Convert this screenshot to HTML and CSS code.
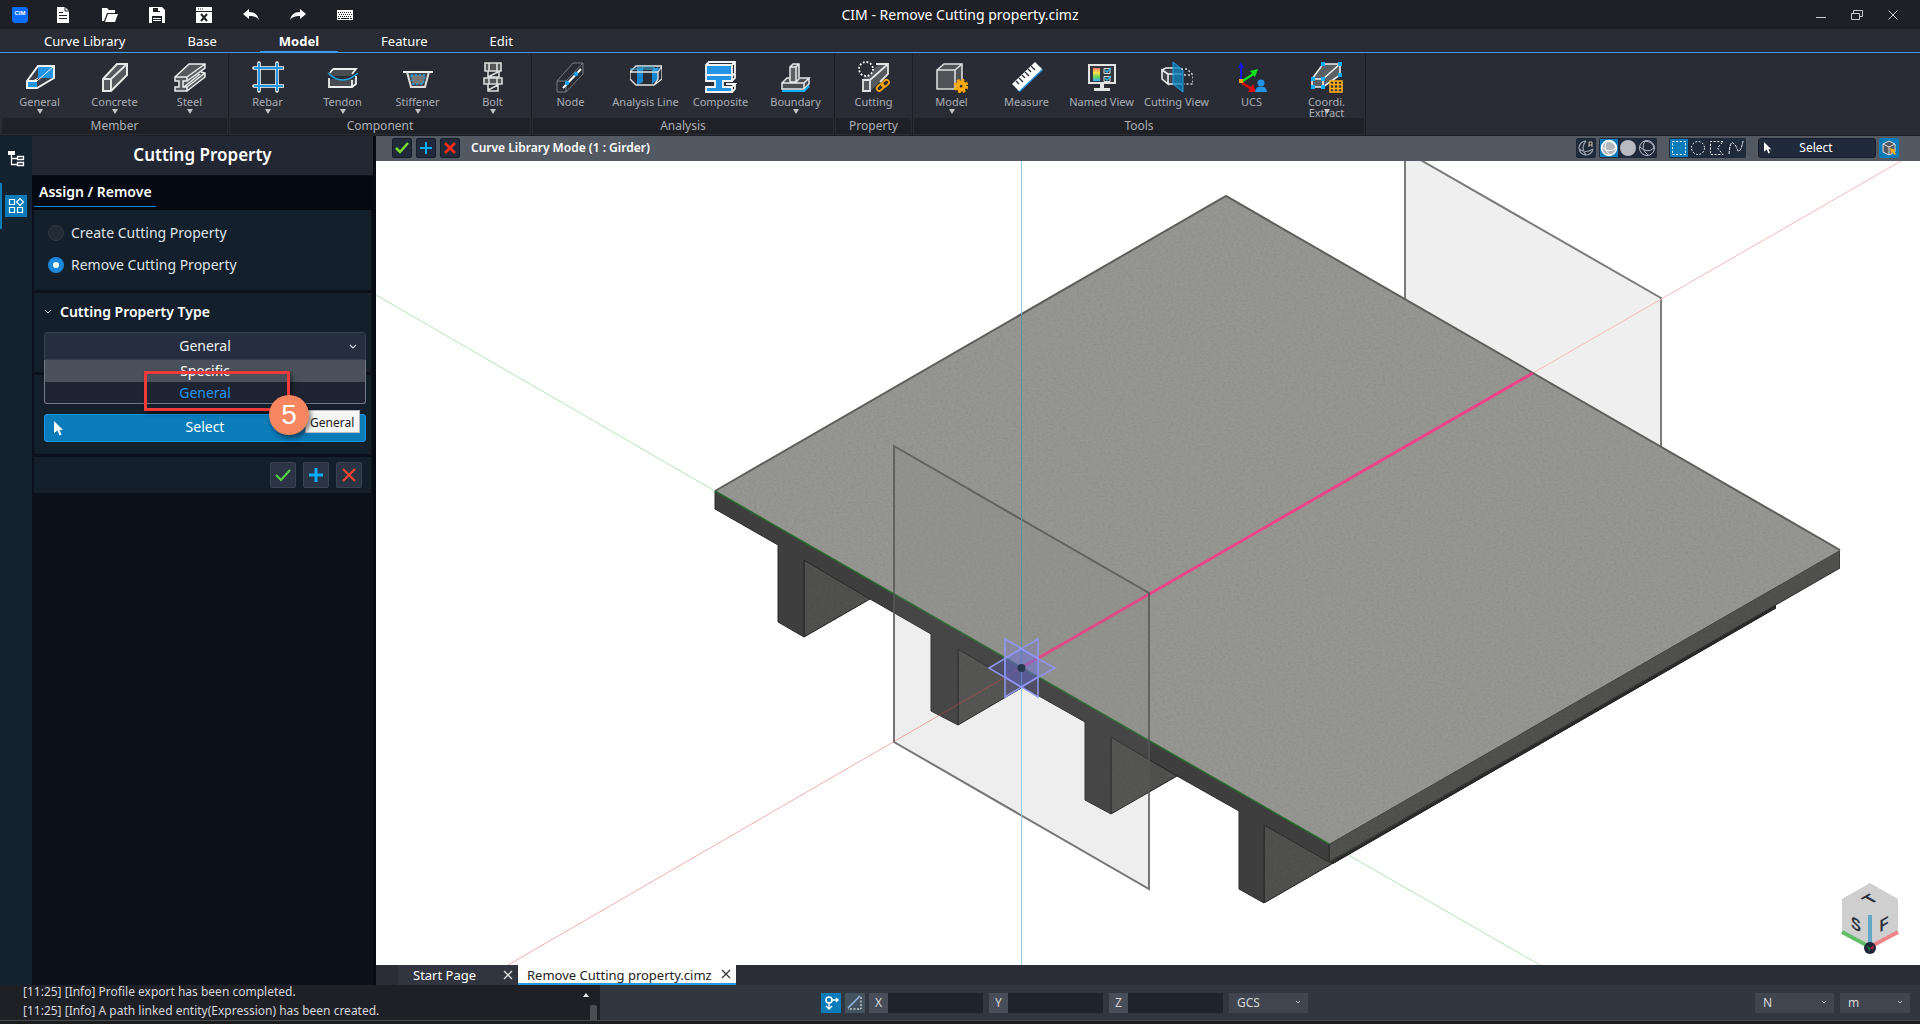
FILE: index.html
```
<!DOCTYPE html>
<html lang="en">
<head>
  <meta charset="UTF-8" />
  <meta name="viewport" content="width=device-width, initial-scale=1.0"/>
  <title>CIM - Remove Cutting property.cimz</title>
  <link rel="stylesheet" href="styles.css">
</head>
<body>
  <header class="titlebar">
    <div class="quick">
      <button class="quick-btn" aria-label="Application menu"><svg width="16" height="16" viewBox="0 0 16 16"><path d="M1 0h13l2 2v12l-2 2H2l-2-2V1z" fill="#0a6cff"/><text x="8" y="8" class="logo-text">CIM</text></svg></button>
      <button class="quick-btn" aria-label="New"><svg width="16" height="16" viewBox="0 0 16 16"><path d="M2 0h8l4 4v12H2z" fill="#fff"/><path d="M10 0v4h4M4 5.500h4M4 8.500h8M4 11.500h8" stroke="#1f2026" fill="none"/></svg></button>
      <button class="quick-btn" aria-label="Open"><svg width="16" height="16" viewBox="0 0 16 16"><path d="M0 1h5l2 2h6v3H5L2 14H0z" fill="#fff"/><path d="M6 7h10l-3 8H3z" fill="#fff"/></svg></button>
      <button class="quick-btn" aria-label="Save"><svg width="16" height="16" viewBox="0 0 16 16"><path d="M0 0h13l3 3v13H0z" fill="#fff"/><path d="M4 1h7v4H4zM3 9h10v7H3z" fill="#1f2026"/><path d="M9 1h2v3H9zM4 11h8v1H4zM4 13h8v1H4z" fill="#fff"/></svg></button>
      <button class="quick-btn" aria-label="Close file"><svg width="16" height="16" viewBox="0 0 16 16"><path d="M0 0h16v16H0z" fill="#fff"/><path d="M0 4.500h16M2 2h1M4 2h1M6 2h1" stroke="#1f2026"/><path d="M5 7l6 7M11 7l-6 7" stroke="#1f2026" stroke-width="2"/></svg></button>
      <button class="quick-btn" aria-label="Undo"><svg width="16" height="16" viewBox="0 0 16 16"><path d="M0 7l6-5v3c6 0 9 3 10 8-2-3-5-4-10-4v3z" fill="#fff"/></svg></button>
      <button class="quick-btn" aria-label="Redo"><svg width="16" height="16" viewBox="0 0 16 16"><path d="M16 7l-6-5v3C4 5 1 8 0 13c2-3 5-4 10-4v3z" fill="#fff"/></svg></button>
      <button class="quick-btn" aria-label="Shortcuts"><svg width="16" height="16" viewBox="0 0 16 16"><path d="M0 3h16v10H0z" fill="#fff"/><path d="M1 5.500h14M2 7.500h13M1 9.500h14" stroke="#1f2026" stroke-dasharray="1 1"/><path d="M1 11.500h2M4 11.500h8M13 11.500h2" stroke="#1f2026"/></svg></button>
    </div>
    <h1 class="app-title">CIM - Remove Cutting property.cimz</h1>
    <div class="window-btns">
      <button aria-label="Minimize"><svg width="12" height="12" viewBox="0 0 12 12"><path d="M1 8.500h10" stroke="#c9cbd0"/></svg></button>
      <button aria-label="Restore"><svg width="12" height="12" viewBox="0 0 12 12"><path d="M.5 4.500h8v6h-8zM2.500 4V1.500h9v6H9" stroke="#c9cbd0" fill="none"/></svg></button>
      <button aria-label="Close"><svg width="12" height="12" viewBox="0 0 12 12"><path d="M1.500 1.500l9 9M10.500 1.500l-9 9" stroke="#c9cbd0"/></svg></button>
    </div>
  </header>

  <nav class="menu">
    <a href="#">Curve Library</a>
    <a href="#">Base</a>
    <a href="#" class="active">Model</a>
    <a href="#">Feature</a>
    <a href="#">Edit</a>
  </nav>

  <section class="ribbon">
    <div class="group">
      <div class="tools">
        <button class="tool has-menu">
          <svg viewBox="0 0 32 32"><path d="M3 20L14 5h17v12L13 28H3z" fill="#3a3e48"/><path d="M14 5h16v12H14z" fill="#2194e6"/><path d="M3 20h10v7H3z" fill="#2194e6"/><path d="M13 20L30 5M14 17l-5 3" stroke="#fff"/><path d="M3 20L14 5h16v12L13 27H3zM3 20h10" fill="none" stroke="#f1f1f1" stroke-width="2"/></svg>
          <span>General</span></button>
        <button class="tool has-menu">
          <svg viewBox="0 0 32 32"><path d="M4 18L18 3h10v11L12 30H4z" fill="#55585c"/><path d="M4 18h8v12M12 18L28 3" stroke="#e3e3e3" stroke-width="2" fill="none"/><path d="M4 18L18 3h10v11L12 30H4z" fill="none" stroke="#e8e8e8" stroke-width="2"/></svg>
          <span>Concrete</span></button>
        <button class="tool has-menu">
          <svg viewBox="0 0 32 32"><path d="M1 16L15 3h16v5l-4 3 4 1v4L13 30H1v-4h4v-6H1z" fill="#55585c"/><path d="M1 16h12v4h-4v6h4v4H1v-4h4v-6H1zM1 16L15 3h16v4L13 20M13 16L31 3M10 26l16-13M27 11l4 1v4L13 30M13 26l18-14" stroke="#ececec" stroke-width="1.500" fill="none"/></svg>
          <span>Steel</span></button>
      </div>
      <div class="group-name">Member</div>
    </div>
    <div class="group">
      <div class="tools">
        <button class="tool has-menu">
          <svg viewBox="0 0 32 32"><path d="M7 2v28M25 2v28M2 7h29M2 25h29" stroke="#fff" stroke-width="3.500" stroke-linecap="round"/><path d="M7 2v28M25 2v28M2 7h29M2 25h29" stroke="#2194e6" stroke-width="2"/></svg>
          <span>Rebar</span></button>
        <button class="tool has-menu">
          <svg viewBox="0 0 32 32"><path d="M7 9h22l-5 6H2zM2 18l24 0 4-3v8l-5 3H2z" fill="#484b50"/><path d="M6 8h23l-4 5M6 8l-3 4M2 17v9h23v-7M25 26l4-3v-8" stroke="#eee" stroke-width="1.800" fill="none"/><path d="M1 12q14 14 30 0" stroke="#1fa5e5" stroke-width="1.600" fill="none"/></svg>
          <span>Tendon</span></button>
        <button class="tool has-menu">
          <svg viewBox="0 0 32 32"><path d="M5 11l4 15h14l4-15z" fill="#44484e"/><path d="M1 11h30" stroke="#f1f1f1" stroke-width="2"/><path d="M5 11l4 15h14l4-15" stroke="#ddd" stroke-width="2" fill="none"/><path d="M9 14h14l-2 9H11z" stroke="#1fa5e5" stroke-width="1.500" stroke-dasharray="2 2" fill="#777"/></svg>
          <span>Stiffener</span></button>
        <button class="tool has-menu">
          <svg viewBox="0 0 32 32"><path d="M8 2h16v8H8zM7 17h18v6H7z" fill="#555"/><path d="M8 2h16v8H8zM12 2v8M20 2v8M11 10v6h11v-6M7 17h18v6H7zM12 17v6M20 17v6M11 23v7h10v-7M11 29l10-5M11 16l10-5" stroke="#ddd" stroke-width="1.600" fill="none"/></svg>
          <span>Bolt</span></button>
      </div>
      <div class="group-name">Component</div>
    </div>
    <div class="group">
      <div class="tools">
        <button class="tool">
          <svg viewBox="0 0 32 32"><path d="M2 20L18 2h10v11L11 31H2zM2 20h9v11M11 20L28 2" stroke="#777a81" fill="none"/><path d="M8 27L26 8" stroke="#fff" stroke-width="2"/><circle cx="12" cy="22" r="2.200" fill="#1fa5f5"/><circle cx="21" cy="13" r="2.200" fill="#1fa5f5"/></svg>
          <span>Node</span></button>
        <button class="tool">
          <svg viewBox="0 0 32 32"><path d="M7 9l6-3v15l-6 3zM22 9l6-3v12l-6 5z" fill="#1688d2"/><path d="M0 11l6-6h26l-4 6zM0 11v7l6 6h18l8-6V5M24 24l4-6v-7" stroke="#e4e4e4" stroke-width="1.300" fill="none"/><path d="M8 10V6h16v5M0 8h31" stroke="#42b8ef" fill="none"/></svg>
          <span>Analysis Line</span></button>
        <button class="tool">
          <svg viewBox="0 0 32 32"><path d="M1 4h26v10H1zM1 15h26v5h-9v6h9v5H1v-5h9v-6H1z" fill="#2194e6"/><path d="M1 4l3-3h26v11l-3 3v5h-9v6h9v5H1v-5h9v-6H1zM1 4h26v10M1 14h26M27 4l3-3M27 20l3-3v-4M27 26l3-3h-9M27 31l3-3v-5" stroke="#f4f4f4" stroke-width="1.800" fill="none"/></svg>
          <span>Composite</span></button>
        <button class="tool has-menu">
          <svg viewBox="0 0 32 32"><path d="M2 22l5-5h22v7l-5 6H2z" fill="#4b4e52"/><path d="M10 6l3-3h6v15l-3 4h-6z" fill="#5b5e62"/><path d="M2 22l5-5h3M20 17h9l-5 5H2v6h22v-6M24 28l5-5v-6M10 21V6h6v15h-6M10 6l3-3h6v15l-3 3M16 6l3-3" stroke="#e8e8e8" stroke-width="1.500" fill="none"/><path d="M2 30h22l5-5" stroke="#08adfa" stroke-width="2" fill="none"/></svg>
          <span>Boundary</span></button>
      </div>
      <div class="group-name">Analysis</div>
    </div>
    <div class="group">
      <div class="tools">
        <button class="tool">
          <svg viewBox="0 0 32 32"><path d="M5 18L21 3h9v11L12 30H5z" fill="#55585c"/><path d="M5 19h7v11H5zM18 3h12v10l-8 8M12 19L30 3" stroke="#e4e4e4" stroke-width="1.800" fill="none"/><circle cx="8" cy="8" r="7" fill="#2a2c35" stroke="#fff" stroke-width="1.800" stroke-dasharray="1.800 1.900"/><g stroke="#f0a30a" stroke-width="1.800" fill="none"><rect x="18" y="24" width="8" height="5" rx="2.500" transform="rotate(-42 22 26)"/><rect x="23" y="20" width="8" height="5" rx="2.500" transform="rotate(-42 27 22)"/></g></svg>
          <span>Cutting</span></button>
      </div>
      <div class="group-name">Property</div>
    </div>
    <div class="group">
      <div class="tools">
        <button class="tool has-menu">
          <svg viewBox="0 0 32 32"><path d="M1 9l7-6h18v19l-6 6H1z" fill="#4f5257"/><path d="M1 9l7-6h18v18l-6 7H1zM1 9h18v19M19 9l7-6" stroke="#ddd" stroke-width="1.600" fill="none"/><circle cx="25" cy="25" r="6" fill="none" stroke="#ffa800" stroke-width="2.500" stroke-dasharray="2.700 2"/><circle cx="25" cy="25" r="3.500" fill="none" stroke="#ffa800" stroke-width="4"/></svg>
          <span>Model</span></button>
        <button class="tool">
          <svg viewBox="0 0 32 32"><path d="M9 31L32 9l-3-3L6 29z" fill="#2194e6"/><path d="M1 23L24 1l7 7L8 30z" fill="#fff"/><path d="M5 20l3 3M8 17l4 4M11 14l3 3M14 11l4 4M17 8l3 3M20 5l4 4" stroke="#2a2c35" stroke-width="1.300"/></svg>
          <span>Measure</span></button>
        <button class="tool">
          <svg viewBox="0 0 32 32"><defs><linearGradient id="rainbow" x2="0" y2="1"><stop stop-color="#f6766c"/><stop offset=".35" stop-color="#ffe04a"/><stop offset=".65" stop-color="#6edb55"/><stop offset="1" stop-color="#3dadf2"/></linearGradient></defs><path d="M3 4h26v18H3z" fill="#33363e" stroke="#e4e4e4" stroke-width="2"/><path d="M7 7h7v13H7z" fill="url(#rainbow)"/><path d="M18 7.500h6v5h-6zM18 15.500h6v5h-6z" stroke="#ddd" fill="none"/><path d="M19 9l2 2 4-4M19 17l2 2 4-4" stroke="#2ab3f5" stroke-width="1.500" fill="none"/><path d="M14 23h4v4h6v3H8v-3h6z" fill="#e4e4e4"/></svg>
          <span>Named View</span></button>
        <button class="tool">
          <svg viewBox="0 0 32 32"><path d="M1 9h12l7-2v16H7l-6-5z" fill="#404349"/><path d="M1 9l4-2h14M1 9l6 4v10l-6-5zM7 13h14M7 23h14" stroke="#eee" stroke-width="1.600" fill="none"/><path d="M12 1l10 8v22l-10-8z" fill="#087fbe" fill-opacity=".75" stroke="#22a3e5"/><path d="M20 8h6l6 6v9h-9M23 14h8" stroke="#d5d5d5" stroke-width="1.500" stroke-dasharray="2 2" fill="none"/></svg>
          <span>Cutting View</span></button>
        <button class="tool">
          <svg viewBox="0 0 32 32"><path d="M5 21V5" stroke="#1717e8" stroke-width="2"/><path d="M5 1l3 6H2z" fill="#1717e8"/><path d="M5 21l14-9" stroke="#0de51b" stroke-width="2.500"/><path d="M22 8l-3 8-5-6z" fill="#0de51b"/><path d="M6 22l10 6" stroke="#de0b0b" stroke-width="2.500"/><path d="M20 31l-8 0 5-8z" fill="#de0b0b"/><path d="M3 18h4v4H3z" fill="#ffa20a"/><circle cx="25" cy="22" r="3.500" fill="#2194e6"/><path d="M19 31q1-6 6-5 5-1 6 5z" fill="#2194e6"/></svg>
          <span>UCS</span></button>
        <button class="tool has-menu">
          <svg viewBox="0 0 32 32"><path d="M1 18L12 3h17v11L13 26H1z" fill="#5b5e62"/><path d="M1 18L12 3h17v11L12 26H1zM1 18h11v8M12 18L29 3" stroke="#eee" stroke-width="1.600" fill="none"/><path d="M10 1h4v4h-4zM27 1h4v4h-4zM27 12h4v4h-4zM0 16h4v4H0zM10 16h4v4h-4zM0 24h4v4H0zM10 24h4v4h-4z" fill="#08adfa"/><path d="M19 20h12v11H19zM19 23.500h12M19 27.500h12M23 20v11M27 20v11" fill="#333" stroke="#ffb11a" stroke-width="1.600"/></svg>
          <span>Coordi.<br>Extract</span></button>
      </div>
      <div class="group-name">Tools</div>
    </div>
  </section>

  <main class="workspace">
    <nav class="rail">
      <button class="rail-btn" aria-label="Works tree"><svg width="18" height="18" viewBox="0 0 18 18"><path d="M1 1h7v4H1z" fill="#fff"/><path d="M4.500 5v9.500H10M4.500 8.500H10M10.500 6.500h6v3h-6zM10.500 12.500h6v3h-6z" stroke="#fff" fill="none" stroke-width="1.300"/></svg></button>
      <button class="rail-btn active" aria-label="Task panel"><svg width="16" height="16" viewBox="0 0 16 16"><path d="M1.500 1.500h5v5h-5zM1.500 9.500h5v5h-5zM9.500 9.500h5v5h-5zM12 .5L15.500 4 12 7.500 8.500 4z" stroke="#fff" fill="none" stroke-width="1.200"/></svg></button>
    </nav>

    <aside class="panel">
      <h2 class="panel-title">Cutting Property</h2>
      <div class="panel-tabs"><a href="#">Assign / Remove</a></div>

      <div class="section radios">
        <label><input type="radio" name="mode">Create Cutting Property</label>
        <label><input type="radio" name="mode" checked>Remove Cutting Property</label>
      </div>

      <div class="section type">
        <h3><svg width="8" height="6" viewBox="0 0 8 6"><path d="M1 1l3 3 3-3" stroke="#d5d8dd" fill="none"/></svg><label for="ptype">Cutting Property Type</label></h3>
        <div class="combo">
          <select id="ptype"><option>General</option><option>Specific</option></select>
          <svg class="chev" width="8" height="6" viewBox="0 0 8 6"><path d="M1 1l3 3 3-3" stroke="#d5d8dd" fill="none" stroke-width="1.200"/></svg>
          <ul class="combo-list">
            <li>Specific</li>
            <li class="chosen">General</li>
          </ul>
          <div class="mark-box"></div>
          <div class="mark-num">5</div>
          <div class="tip">General</div>
        </div>
      </div>

      <div class="section target">
        <button class="select-btn"><svg width="10" height="15" viewBox="0 0 10 15"><path d="M0 0l9 9H5.500l2 4.500-2 1-2-5L0 12z" fill="#fff"/></svg>Select</button>
      </div>

      <div class="section actions">
        <button aria-label="OK"><svg width="16" height="14" viewBox="0 0 16 14"><path d="M1 7l5 5 9-10" stroke="#58d043" stroke-width="2" fill="none"/></svg></button>
        <button aria-label="Apply"><svg width="16" height="16" viewBox="0 0 16 16"><path d="M8 1v14M1 8h14" stroke="#08adfa" stroke-width="3"/></svg></button>
        <button aria-label="Cancel"><svg width="14" height="14" viewBox="0 0 14 14"><path d="M1 1l12 12M13 1L1 13" stroke="#ff4530" stroke-width="2"/></svg></button>
      </div>
    </aside>

    <section class="view">
      <div class="view-bar">
        <button class="sq" aria-label="OK"><svg width="16" height="14" viewBox="0 0 16 14"><path d="M2 7l4 4 8-9" stroke="#7ddc32" stroke-width="2.500" fill="none"/></svg></button>
        <button class="sq" aria-label="Add"><svg width="14" height="14" viewBox="0 0 14 14"><path d="M7 1v12M1 7h12" stroke="#08adfa" stroke-width="2"/></svg></button>
        <button class="sq" aria-label="Cancel"><svg width="14" height="14" viewBox="0 0 14 14"><path d="M2 2l10 10M12 2L2 12" stroke="#ff2b1c" stroke-width="2.500"/></svg></button>
        <strong class="mode">Curve Library Mode (1 : Girder)</strong>
        <div class="view-tools">
          <div class="cluster"><button aria-label="Auto shading"><svg width="16" height="16" viewBox="0 0 16 16"><path d="M8 1a7 7 0 1 0 7 8M8 1q-6 7 0 14M1 9q7 5 14 0" stroke="#9a9fa8" fill="none" stroke-width="1.200"/><path d="M11 7V2h3v5M11 5h3" stroke="#c9bfa4" fill="none"/></svg></button></div>
          <div class="cluster">
            <button class="on" aria-label="Shaded with edges"><svg width="18" height="18" viewBox="0 0 18 18"><circle cx="9" cy="9" r="7.500" fill="#b3b6bb" stroke="#fff" stroke-width="1.500"/><path d="M7 2q-5 8 3 14M2 8q7 7 14 1M7 2q8 1 9 7" stroke="#fff" fill="none"/></svg></button>
            <button aria-label="Shaded"><svg width="18" height="18" viewBox="0 0 18 18"><circle cx="9" cy="9" r="8" fill="#b8bac2"/></svg></button>
            <button aria-label="Wireframe"><svg width="18" height="18" viewBox="0 0 18 18"><circle cx="9" cy="9" r="7.500" fill="none" stroke="#b8bac2"/><path d="M7 2q-5 8 3 14M2 8q7 7 14 1M7 2q8 1 9 7" stroke="#b8bac2" fill="none"/></svg></button>
          </div>
          <div class="cluster wide">
            <button class="on" aria-label="Box selection"><svg width="16" height="16" viewBox="0 0 16 16"><path d="M1.500 1.500h13v13h-13z" stroke="#fff" stroke-dasharray="2 1.700" fill="none"/></svg></button>
            <button aria-label="Circle selection"><svg width="16" height="16" viewBox="0 0 16 16"><circle cx="8" cy="8" r="6.500" stroke="#fff" stroke-dasharray="1.700 1.700" fill="none"/></svg></button>
            <button aria-label="Polygon selection"><svg width="16" height="16" viewBox="0 0 16 16"><path d="M14 1.500H1.500v13H14L8.500 8z" stroke="#fff" stroke-dasharray="2 1.700" fill="none"/></svg></button>
            <button aria-label="Polyline selection"><svg width="16" height="16" viewBox="0 0 16 16"><path d="M1 14Q2 1 5 3t5 8q3 1 5-10" stroke="#fff" stroke-dasharray="3 1" fill="none"/></svg></button>
          </div>
          <button class="pick"><svg width="8" height="12" viewBox="0 0 10 15"><path d="M0 0l9 9H5.500l2 4.500-2 1-2-5L0 12z" fill="#fff"/></svg>Select</button>
          <button class="sq on" aria-label="Pick solid"><svg width="16" height="16" viewBox="0 0 16 16"><path d="M8 1l6 3v8l-6 3-6-3V4z" fill="#55585e" stroke="#ddd"/><path d="M2 4l6 3 6-3M8 7v8" stroke="#ddd" fill="none"/><path d="M9 8l6 2-2 1 2 3-1 1-3-3-1 2z" fill="#ffad0f"/></svg></button>
        </div>
      </div>

      <svg class="scene" viewBox="376 161 1544 804" preserveAspectRatio="xMidYMid slice">
        <defs>
          <filter id="grain" x="0" y="0" width="1" height="1">
            <feTurbulence type="fractalNoise" baseFrequency=".35 .5" numOctaves="3" seed="4" result="n"/>
            <feColorMatrix in="n" values="0 0 0 0 0  0 0 0 0 0  0 0 0 0 0  .25 0 0 0 -.1" result="d"/>
            <feComposite in="d" in2="SourceAlpha" operator="in" result="g"/>
            <feMerge><feMergeNode in="SourceGraphic"/><feMergeNode in="g"/></feMerge>
          </filter>
        </defs>
        <!-- axes behind the deck -->
        <path d="M376 295L715 491M1329 844L1540 965" stroke="#b4e6b4" fill="none"/>
        <path d="M1405 151L1661 298V594L1405 446z" fill="#efefef" stroke="#7b7b7b" stroke-width="2"/>
        <path d="M1533 373L1901 161" stroke="#f5b9b9" fill="none"/>
        <!-- girder sides -->
        <g fill="#51514f" stroke="#222" filter="url(#grain)">
          <path d="M804 560L870 599 804 637z"/>
          <path d="M958 649L1023 687 958 725z"/>
          <path d="M1111 737L1177 776 1111 814z"/>
          <path d="M1264 826L1776 598V608L1264 903z"/>
        </g>
        <path d="M1329 863L1776 605V608L1333 864z" fill="#292929"/>
        <!-- deck -->
        <path d="M1329 844L1840 550V568L1329 862z" fill="#51514f" stroke="#333" filter="url(#grain)"/>
        <path d="M715 491L1329 844V862L1264 825V903L1239 889V811L1177 776 1111 737V814L1085 800V722L1023 687 958 649V725L931 711V634L870 599 804 560V637L778 622V545L715 509z" fill="#3e3e3e" stroke="#2b2b2b"/>
        <path d="M715 491L1226 196 1840 550 1329 844z" fill="#969692" filter="url(#grain)"/>
        <path d="M715 491L1226 196 1840 550" fill="none" stroke="#5e5e5c" stroke-width="2"/>
        <path d="M715 491L1329 844" stroke="#276b2c" stroke-width="1.500"/>
        <path d="M1021 668L1533 373" stroke="#ee4387" stroke-width="3"/>
        <path d="M894 446L1149 593V889L894 742z" fill="#787878" fill-opacity=".13" stroke="#555" stroke-opacity=".8" stroke-width="2"/>
        <path d="M1021 668L508 965" stroke="#e64646" stroke-opacity=".45"/>
        <path d="M1021.500 161V965" stroke="#8fcfe6"/>
        <path d="M1021.500 314V687" stroke="#5a93a2"/>
        <!-- origin planes -->
        <g fill="#6e72dc" fill-opacity=".22" stroke="#9196f2" stroke-width="1.500">
          <path d="M1005 639L1038 658V697L1005 677z"/>
          <path d="M1038 639V677L1005 697V658z"/>
          <path d="M989 668L1021 649 1055 668 1021 687z"/>
        </g>
        <circle cx="1021.500" cy="668" r="4" fill="#27384e"/>
        <!-- view cube -->
        <path d="M1870 883L1898 899V932L1870 947 1842 932V899z" fill="#cfcfcf"/>
        <path d="M1842 932L1870 947" stroke="#62bd68" stroke-width="4"/>
        <path d="M1898 932L1870 947" stroke="#ed8588" stroke-width="4"/>
        <path d="M1870 915V944" stroke="#62a9c8" stroke-width="4"/>
        <circle cx="1870" cy="948" r="6" fill="#1e2438"/>
        <path d="M1866 945l4 3v4z" fill="#15853a"/><path d="M1874 945l-4 3 3 2z" fill="#b51f38"/>
        <g class="cube-text">
          <text transform="matrix(.87 .5 0 1 1856 930)">S</text>
          <text transform="matrix(.87 -.5 0 1 1884 930)">F</text>
          <text transform="matrix(.87 -.5 .87 .5 1875 902)">T</text>
        </g>
      </svg>

      <div class="doc-tabs">
        <div class="doc-tab"><a href="#">Start Page</a><button aria-label="Close Start Page"><svg width="10" height="10" viewBox="0 0 10 10"><path d="M1 1l8 8M9 1L1 9" stroke="#e4e4e4" stroke-width="1.300"/></svg></button></div>
        <div class="doc-tab current"><a href="#">Remove Cutting property.cimz</a><button aria-label="Close document"><svg width="10" height="10" viewBox="0 0 10 10"><path d="M1 1l8 8M9 1L1 9" stroke="#333" stroke-width="1.300"/></svg></button></div>
      </div>
    </section>
  </main>

  <footer class="status">
    <div class="log">
      <p>[11:25] [Info] Profile export has been completed.</p>
      <p>[11:25] [Info] A path linked entity(Expression) has been created.</p>
      <svg class="log-up" width="6" height="4" viewBox="0 0 6 4"><path d="M3 0l3 4H0z" fill="#eee"/></svg>
      <div class="log-thumb"></div>
    </div>
    <div class="coords">
      <button class="snap on" aria-label="Snap point"><svg width="16" height="16" viewBox="0 0 16 16"><circle cx="6" cy="5" r="3" stroke="#fff" stroke-width="1.600" fill="none"/><path d="M9 5h6M13 3l2 2-2 2M6 8v6M3 11l3 3 3-3" stroke="#fff" stroke-width="1.300" fill="none"/></svg></button>
      <button class="snap" aria-label="Relative input"><svg width="16" height="16" viewBox="0 0 16 16"><path d="M1 13L13 1" stroke="#93bdf0" stroke-width="1.500"/><path d="M14 2v12H1" stroke="#fff" stroke-dasharray="2 1.500" fill="none"/></svg></button>
      <label class="coord"><span>X</span><input type="text"></label>
      <label class="coord"><span>Y</span><input type="text"></label>
      <label class="coord"><span>Z</span><input type="text"></label>
      <div class="unit"><select aria-label="Coordinate system"><option>GCS</option></select><svg class="chev" width="6" height="5" viewBox="0 0 6 5"><path d="M1 1l2 2 2-2" stroke="#b8bac2" fill="none"/></svg></div>
    </div>
    <div class="units">
      <div class="unit"><select aria-label="Force unit"><option>N</option></select><svg class="chev" width="6" height="5" viewBox="0 0 6 5"><path d="M1 1l2 2 2-2" stroke="#b8bac2" fill="none"/></svg></div>
      <div class="unit short"><select aria-label="Length unit"><option>m</option></select><svg class="chev" width="6" height="5" viewBox="0 0 6 5"><path d="M1 1l2 2 2-2" stroke="#b8bac2" fill="none"/></svg></div>
    </div>
  </footer>
</body>
</html>
```
FILE: styles.css
```
* {
  box-sizing: border-box;
}

body {
  margin: 0;
  height: 100vh;
  display: flex;
  flex-direction: column;
  overflow: hidden;
  background: #1c1c1e;
  color: #fff;
  font-family: "Noto Sans", "Open Sans", sans-serif;
  font-size: 14px;
}

button, select, input {
  font: inherit;
  color: inherit;
  border: none;
  margin: 0;
  padding: 0;
  background: none;
}

button {
  display: flex;
  align-items: center;
  justify-content: center;
  cursor: pointer;
}

a {
  color: inherit;
  text-decoration: none;
}

svg {
  display: block;
  flex: none;
}

/* title bar */
.titlebar {
  display: flex;
  justify-content: space-between;
  align-items: center;
  height: 29px;
  background: #1f2026;
  position: relative;
}

.quick {
  display: flex;
  gap: 31px;
  padding-left: 12px;
}

.quick-btn:first-child {
  margin-right: -4px;
}

.logo-text {
  fill: #fff;
  font: bold 6px "Liberation Sans", sans-serif;
  text-anchor: middle;
}

.app-title {
  position: absolute;
  left: 0;
  right: 0;
  margin: 0;
  text-align: center;
  font-size: 14px;
  font-weight: 400;
  line-height: 32px;
  pointer-events: none;
}

.window-btns {
  display: flex;
  gap: 24px;
  padding-right: 21px;
}

/* menu */
.menu {
  display: flex;
  gap: 24px;
  height: 24px;
  padding-left: 25px;
  background: #2a2c35;
  border-bottom: 1px solid #3d9bf5;
  font-size: 13px;
  line-height: 25px;
}

.menu a {
  padding: 0 19px;
}

.menu .active {
  font-weight: 700;
  border-bottom: 1px solid #3d9bf5;
}

/* ribbon */
.ribbon {
  display: flex;
  gap: 1px;
  height: 83px;
  padding-left: 2px;
  background: #2a2c35;
  border-bottom: 1px solid #1c1e24;
  color: #a9adb5;
  font-size: 12px;
}

.group {
  padding-right: 1px;
  border-right: 1px solid #1c1e24;
}

.tools {
  display: flex;
  height: 65px;
}

.tool {
  position: relative;
  flex-direction: column;
  justify-content: flex-start;
  width: 75px;
  padding-top: 8px;
  font-size: 11px;
  line-height: 11px;
  white-space: nowrap;
}

.tool svg {
  width: 32px;
  height: 32px;
  margin-bottom: 3px;
}

.has-menu::after {
  content: "";
  position: absolute;
  top: 56px;
  border: 3px solid transparent;
  border-top: 5px solid #c3c5c9;
  border-bottom: 0;
}

.group-name {
  height: 16px;
  background: #202126;
  text-align: center;
  line-height: 16px;
}

/* workspace */
.workspace {
  flex: 1;
  display: flex;
  min-height: 0;
}

.rail {
  width: 32px;
  background: #142230;
  padding-top: 14px;
}

.rail-btn {
  width: 32px;
  height: 18px;
}

.rail-btn.active {
  height: 46px;
  margin-top: 15px;
  border-left: 2px solid #0a7cba;
  padding-right: 2px;
}

.rail-btn.active svg {
  width: 22px;
  height: 22px;
  padding: 3px;
  background: #0a7cba;
}

.panel {
  width: 344px;
  background: #0a111b;
  border-right: 3px solid #060a12;
}

.panel-title {
  margin: 0 0 1px;
  height: 39px;
  background: #232733;
  font-size: 17px;
  font-weight: 600;
  line-height: 37px;
  text-align: center;
}

.panel-tabs {
  height: 34px;
  padding-left: 2px;
  background: #040a12;
}

.panel-tabs a {
  display: inline-block;
  height: 31px;
  padding: 0 4px 0 5px;
  border-bottom: 1px solid #1d87dc;
  font-weight: 600;
  line-height: 31px;
}

.section {
  margin: 0 2px 3px;
  background: #141f2c;
}

.radios {
  display: flex;
  flex-direction: column;
  gap: 12px;
  height: 80px;
  padding: 13px 14px;
}

.radios label {
  display: flex;
  align-items: center;
  gap: 7px;
  color: #dfe3e8;
  line-height: 20px;
}

.radios input {
  appearance: none;
  width: 16px;
  height: 16px;
  border: 1px solid #353b46;
  border-radius: 50%;
  background: #222a36;
}

.radios input:checked {
  border: 5px solid #1d87dc;
  background: #fff;
}

.type {
  height: 79px;
  padding: 9px 5px 0 10px;
}

.type h3 {
  display: flex;
  align-items: center;
  gap: 8px;
  margin: 0 0 10px;
  font-size: 14px;
  font-weight: 600;
  line-height: 20px;
}

.combo {
  position: relative;
}

.combo select {
  appearance: none;
  display: block;
  width: 100%;
  height: 28px;
  padding-bottom: 2px;
  background: #252e3f;
  border: 1px solid #364050;
  border-radius: 3px 3px 0 0;
  text-align: center;
  text-align-last: center;
  color: #f0f2f5;
}

.chev {
  position: absolute;
  right: 9px;
  top: 12px;
  pointer-events: none;
}

.combo-list {
  position: absolute;
  z-index: 2;
  top: 28px;
  left: 0;
  right: 0;
  margin: 0;
  padding: 0;
  list-style: none;
  background: #1e2431;
  border: 1px solid #737982;
  border-top: none;
  border-radius: 0 0 3px 3px;
  text-align: center;
  line-height: 21px;
}

.combo-list li:first-child {
  background: #4b515c;
  line-height: 22px;
}

.combo-list .chosen {
  color: #2196f3;
}

.mark-box {
  position: absolute;
  z-index: 3;
  left: 100px;
  top: 39px;
  width: 146px;
  height: 40px;
  border: 3px solid #f23a3a;
  box-shadow: 2px 2px 4px rgba(0, 0, 0, 0.5);
}

.mark-num {
  position: absolute;
  z-index: 4;
  left: 225px;
  top: 63px;
  width: 40px;
  height: 40px;
  border-radius: 50%;
  background: #f58660;
  box-shadow: 2px 3px 5px rgba(0, 0, 0, 0.5);
  font: 28px/40px "Liberation Sans", sans-serif;
  text-align: center;
}

.tip {
  position: absolute;
  z-index: 3;
  left: 261px;
  top: 78px;
  height: 23px;
  padding: 0 5px 0 4px;
  background: #f6f6f6;
  border: 1px solid #b9bcc0;
  color: #222;
  font-size: 12px;
  line-height: 23px;
}

.target {
  height: 79px;
  padding: 39px 5px 0 10px;
}

.select-btn {
  position: relative;
  width: 100%;
  height: 28px;
  padding-bottom: 3px;
  background: #0a7cba;
  border: 1px solid #1c97ee;
  border-radius: 3px;
}

.select-btn svg {
  position: absolute;
  left: 9px;
  top: 6px;
}

.actions {
  display: flex;
  justify-content: flex-end;
  gap: 7px;
  height: 36px;
  padding: 5px 9px;
}

.actions button {
  width: 26px;
  height: 26px;
  background: #2a3444;
  border: 1px solid #394352;
  border-radius: 2px;
}

/* 3D view */
.view {
  flex: 1;
  display: flex;
  flex-direction: column;
  min-width: 0;
  background: #fff;
}

.view-bar {
  display: flex;
  align-items: center;
  gap: 4px;
  height: 25px;
  padding: 0 21px 1px 16px;
  background: #535962;
}

.sq {
  width: 20px;
  height: 20px;
  background: #1f2a3b;
  border: 1px solid #151d29;
  border-radius: 2px;
}

.view-bar .on {
  background: #0a7cba;
  border-color: #0a7cba;
}

.mode {
  margin-left: 7px;
  padding-bottom: 2px;
  font-size: 12px;
  font-weight: 600;
}

.view-tools {
  display: flex;
  gap: 3px;
  margin-left: auto;
}

.cluster {
  display: flex;
  height: 20px;
  padding: 1px;
  background: #1f2a3b;
  border-radius: 2px;
}

.cluster button {
  width: 18px;
  height: 18px;
}

.cluster button + button {
  width: 19px;
}

.wide {
  margin: 0 9px;
}

.pick {
  position: relative;
  width: 118px;
  height: 20px;
  padding: 0 2px 2px 0;
  background: #1f2a3b;
  border: 1px solid #161e2b;
  border-radius: 3px;
  font-size: 12px;
}

.pick svg {
  position: absolute;
  left: 5px;
  top: 3px;
}

.scene {
  flex: 1;
  width: 100%;
  min-height: 0;
}

.cube-text {
  fill: #2d323e;
  font: bold 17px "Liberation Sans", sans-serif;
  text-anchor: middle;
}

.doc-tabs {
  display: flex;
  gap: 1px;
  height: 20px;
  padding-left: 22px;
  background: #2a2d36;
  font-size: 13px;
  line-height: 21px;
}

.doc-tab {
  display: flex;
  justify-content: space-between;
  min-width: 119px;
  gap: 9px;
  padding: 0 4px 0 15px;
  background: #30353f;
}

.doc-tab.current {
  padding: 0 5px 0 9px;
  background: #fff;
  border-bottom: 2px solid #2299e0;
  color: #222;
}

/* status bar */
.status {
  display: flex;
  height: 39px;
  background: #303741;
  border-bottom: 3px solid #1c1c1e;
  box-shadow: inset 0 -1px #4a4a4c;
}

.log {
  position: relative;
  width: 600px;
  padding: 0 23px;
  background: #1f2026;
  border-bottom: 1px solid #4a4a4c;
  color: #d5d7da;
  font-size: 12px;
  line-height: 19px;
  overflow: hidden;
}

.log p {
  margin: 0;
  margin-top: -3px;
}

.log p + p {
  margin-top: 0;
}

.log-up {
  position: absolute;
  right: 11px;
  top: 8px;
}

.log-thumb {
  position: absolute;
  right: 3px;
  bottom: 0;
  width: 7px;
  height: 15px;
  background: #4c4d52;
  border-radius: 2px 2px 0 0;
}

.coords, .units {
  display: flex;
  align-items: center;
  padding-bottom: 1px;
}

.coords {
  gap: 6px;
  padding-left: 221px;
}

.units {
  gap: 6px;
  margin-left: auto;
  padding-right: 10px;
}

.snap {
  width: 20px;
  height: 20px;
  margin-right: -2px;
  background: #45535f;
}

.snap.on {
  background: #0a7cba;
}

.coord {
  display: flex;
  height: 20px;
  line-height: 20px;
  text-align: center;
  color: #d5d7da;
  font-size: 12px;
}

.coord span {
  width: 19px;
  background: #484d5a;
}

.coord input {
  width: 95px;
  background: #1f232b;
}

.unit {
  position: relative;
  width: 79px;
}

.unit.short {
  width: 70px;
}

.unit select {
  appearance: none;
  width: 100%;
  height: 20px;
  padding-left: 8px;
  background: #404550;
  color: #d5d7da;
  font-size: 12px;
}

.unit .chev {
  right: 7px;
  top: 8px;
}
```
